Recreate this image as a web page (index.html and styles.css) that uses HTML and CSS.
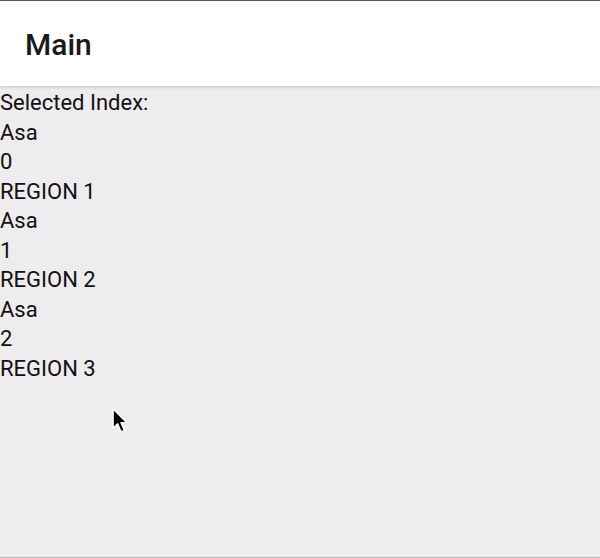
FILE: index.html
```html
<!DOCTYPE html>
<html>
<head>
<meta charset="utf-8">
<link rel="stylesheet" href="styles.css">
</head>
<body>
<div class="frame">
  <header class="appbar"><h1 class="title">Main</h1></header>
  <main class="content">
    <div class="line">Selected Index:</div>
    <div class="line">Asa</div>
    <div class="line">0</div>
    <div class="line">REGION 1</div>
    <div class="line">Asa</div>
    <div class="line">1</div>
    <div class="line">REGION 2</div>
    <div class="line">Asa</div>
    <div class="line">2</div>
    <div class="line">REGION 3</div>
  </main>
  <svg class="cursor" width="18" height="27" viewBox="0 0 16 24">
    <path d="M1 1 L1 18 L5 14 L8 21 L11 20 L8 13 L13 13 Z" fill="#000" stroke="#fff" stroke-width="1.2" stroke-linejoin="round"/>
  </svg>
</div>
</body>
</html>
```
FILE: styles.css
```css
html, body {
  margin: 0;
  padding: 0;
  width: 600px;
  height: 558px;
  overflow: hidden;
}
.frame {
  position: relative;
  width: 600px;
  height: 558px;
  box-sizing: border-box;
  border-top: 1px solid #5a5a5a;
  border-bottom: 1px solid #b5b5b5;
  background: #eeecee;
  display: flex;
  flex-direction: column;
  font-family: Roboto, "Liberation Sans", sans-serif;
  color: #111;
}
.appbar {
  height: 85px;
  background: #fff;
  display: flex;
  align-items: center;
  padding-left: 25px;
  box-shadow: 0 1px 3px rgba(0,0,0,0.18);
  position: relative;
  z-index: 1;
}
.title {
  margin: 0;
  font-size: 30px;
  font-weight: 500;
  color: #1a1a1a;
  padding-top: 2px;
}
.content {
  padding-top: 2px;
}
.line {
  font-size: 22px;
  line-height: 29.5px;
  height: 29.5px;
}
.cursor {
  position: absolute;
  left: 112px;
  top: 407px;
}
```
